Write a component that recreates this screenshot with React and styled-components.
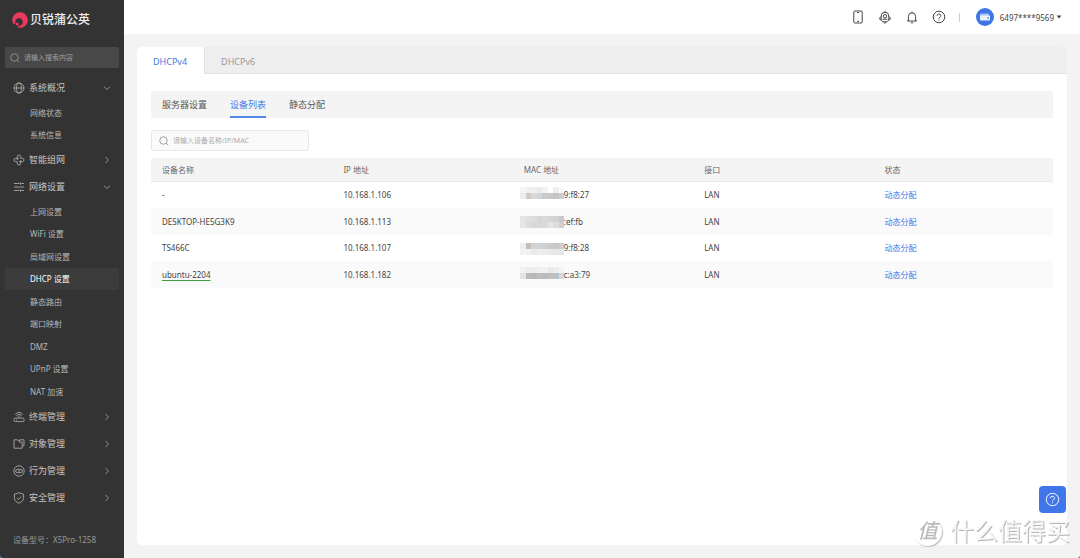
import React, { useState } from 'react';
import styled, { createGlobalStyle } from 'styled-components';

const GlobalStyle = createGlobalStyle`
* {
    box-sizing: border-box;
}
body {
    margin: 0;
    background: #1f7fc4;
    font-family: "Noto Sans", "Noto Sans CJK SC", sans-serif;
    font-size: 8px;
    line-height: 12px;
    color: #444;
}
button, input {
    font-family: inherit;
}
`;

const menus = [
    { name: '系统概况', icon: 'globe', open: true, items: ['网络状态', '系统信息'] },
    { name: '智能组网', icon: 'mesh' },
    {
        name: '网络设置',
        icon: 'sliders',
        open: true,
        items: ['上网设置', 'WiFi 设置', '局域网设置', 'DHCP 设置', '静态路由', '端口映射', 'DMZ', 'UPnP 设置', 'NAT 加速'],
    },
    { name: '终端管理', icon: 'router' },
    { name: '对象管理', icon: 'folder' },
    { name: '行为管理', icon: 'behavior' },
    { name: '安全管理', icon: 'shield' },
];

const devices = [
    {
        name: '-', ip: '10.168.1.106', mac: '9:f8:27', port: 'LAN', top: 1,
        blocks: [
            ['#f4f4f4', '#f0f0ef', '#eeeeee', '#ebebeb', '#f3f3f3', '#ffffff', '#eeeeee', '#fafafa'],
            ['#efedec', '#d2cbc4', '#d8d9d8', '#cdd7dd', '#cacaca', '#c8c7c5', '#c4c4c4', '#cfcfcf'],
        ],
    },
    {
        name: 'DESKTOP-HE5G3K9', ip: '10.168.1.113', mac: ':ef:fb', port: 'LAN', top: 3,
        blocks: [
            ['#e4e4e4', '#e0e0e0', '#dedede', '#d6d6d6', '#d9d9d9', '#d6d6d6', '#d2d2d2', '#c9c9c9'],
            ['#e6e6e6', '#dcdcda', '#d8d8d8', '#d8d8d8', '#dadada', '#e4e4e4', '#dcdcdc', '#cfcfcf'],
        ],
    },
    {
        name: 'TS466C', ip: '10.168.1.107', mac: '9:f8:28', port: 'LAN', top: 4,
        blocks: [
            ['#eeeeee', '#c6beb8', '#d0d4d6', '#cdd3d6', '#cfcfcf', '#cbcbcb', '#c8c8c8', '#cfcfcf'],
            ['#f2f2f2', '#f0f0f0', '#eaeaea', '#eeeeee', '#ececec', '#e9e9e9', '#e7e7e7', '#e6e6e6'],
        ],
    },
    {
        name: 'ubuntu-2204', ip: '10.168.1.182', mac: 'c:a3:79', port: 'LAN', link: true, top: 1,
        blocks: [
            ['#f2f2f2', '#ececec', '#ededed', '#f0f0f0', '#f2f2f2', '#e9e9e9', '#ededed', '#f4f4f4'],
            ['#e4e4e4', '#bababa', '#b8b8b8', '#c3bbb5', '#b8bcc0', '#c4beba', '#b8c2c8', '#d6d6d6'],
        ],
    },
];

const shapes = {
    globe: <><circle cx="7" cy="7" r="5" /><ellipse cx="7" cy="7" rx="2.4" ry="5" /><path d="M2 7h10" /></>,
    mesh: <><path d="M5.3 5.3V3.7a1.7 1.7 0 0 1 3.4 0v1.6M8.7 5.3h1.6a1.7 1.7 0 0 1 0 3.4H7M8.7 7v3.3a1.7 1.7 0 0 1-3.4 0V8.7M5.3 8.7H3.7a1.7 1.7 0 0 1 0-3.4H7M5.3 5.3V7" /></>,
    sliders: <><path d="M2 3.5h5.6M9.4 3.5H12M2 7h2.2M6 7h6M2 10.5h5.6M9.4 10.5H12M8.5 2.3v2.4M5 5.8v2.4M8.5 9.3v2.4" /></>,
    router: <><rect x="2" y="8" width="10" height="3.6" rx="1.2" /><path d="M7 8V5.8M4.6 6.2a2.5 2.5 0 0 1 4.8 0M3.4 4.6a4 4 0 0 1 7.2 0M4 9.8h1" /></>,
    folder: <><path d="M7.6 3.6H6.2L5.2 2.8H2v8.4h8.2V6.6M7.6 2.8h4.4v6h-1.6M7.6 2.8v2.4h2.6v1.6" /></>,
    behavior: <><circle cx="7" cy="7" r="5.2" /><rect x="3.6" y="5.4" width="6.8" height="3.2" rx="1.6" /><path d="M7 5.4v3.2" /></>,
    shield: <><path d="M7 1.8 11.6 3.2v4c0 2.4-2 4-4.6 5-2.6-1-4.6-2.6-4.6-5v-4z" /><path d="m4.8 6.8 1.7 1.6 2.9-3" /></>,
    search: <><circle cx="6.4" cy="6.4" r="4.4" /><path d="m9.6 9.6 2.4 2.4" /></>,
    down: <path d="m3.4 5.5 3.6 3.2 3.6-3.2" />,
    right: <path d="m5.4 3.4 3.2 3.6-3.2 3.6" />,
    phone: <><rect x="2.8" y="1" width="8.4" height="12" rx="1" /><path d="M6 2.6h2M6 11.4h2" /></>,
    robot: <><path d="M3.2 10V6a3.8 3.8 0 0 1 7.6 0v4L9 11.8H5zM3.2 6.4 1.8 7.8v1.6L3.2 10M10.8 6.4l1.4 1.4v1.6l-1.4.6M7 2.2V1M5.8 12.8h2.4M4.6 9.2h4.8" /><circle cx="7" cy="6.2" r="1.7" /></>,
    bell: <><path d="M2 11h10M3.4 11V6.4a3.6 3.6 0 0 1 7.2 0V11M7 2.8V1.4M5.8 12.8h2.4" /></>,
    help: <><circle cx="7" cy="7" r="5.8" /><path d="M5.2 5.8a1.8 1.8 0 1 1 2.7 1.5c-.6.4-.9.6-.9 1.3M7 9.6v.9" /></>,
};

const Icon = ({ name, size = 14 }) => (
    <svg width={size} height={size} viewBox="0 0 14 14" fill="none" stroke="currentColor" strokeWidth="0.9" aria-hidden="true">
        {shapes[name]}
    </svg>
);

const Mosaic = ({ blocks, top }) => (
    <svg width="44" height="18" viewBox="0 0 44 18" shapeRendering="crispEdges" aria-hidden="true">
        {blocks.map((line, y) =>
            line.map((fill, x) => <rect key={x + '-' + y} x={x * 5.5} y={top + y * 6} width="5.5" height="6" fill={fill} />)
        )}
    </svg>
);

const App = () => {
    const [active, setActive] = useState('DHCP 设置');
    const [keyword, setKeyword] = useState('');

    return (
        <Page>
            <GlobalStyle />
            <Sidebar>
                <Brand href="#">
                    <svg width="16" height="16" viewBox="0 0 16 16" aria-hidden="true">
                        <circle cx="8" cy="8" r="7.8" fill="#e8395f" />
                        <circle cx="7" cy="10" r="3.7" fill="#333" />
                        <path d="M3.2 15.6 1.6 12.6 3.8 11l3 3.4z" fill="#333" />
                        <circle cx="5.2" cy="12" r="1.6" fill="#e8395f" />
                    </svg>
                    贝锐蒲公英
                </Brand>
                <MenuSearch>
                    <Icon name="search" size={12} />
                    <input type="search" aria-label="搜索" placeholder="请输入搜索内容" />
                </MenuSearch>
                <Menu>
                    {menus.map((menu) => (
                        <li key={menu.name}>
                            <MenuButton type="button" aria-expanded={!!menu.open}>
                                <Icon name={menu.icon} />
                                <span>{menu.name}</span>
                                <Icon name={menu.open ? 'down' : 'right'} size={12} />
                            </MenuButton>
                            {menu.items && (
                                <SubMenu>
                                    {menu.items.map((item) => (
                                        <SubItem key={item}>
                                            <SubLink href="#" $active={item === active} onClick={() => setActive(item)}>{item}</SubLink>
                                        </SubItem>
                                    ))}
                                </SubMenu>
                            )}
                        </li>
                    ))}
                </Menu>
                <Model>设备型号：X5Pro-1258</Model>
            </Sidebar>

            <Main>
                <TopBar>
                    <TopButton type="button" aria-label="手机"><Icon name="phone" /></TopButton>
                    <TopButton type="button" aria-label="助手"><Icon name="robot" /></TopButton>
                    <TopButton type="button" aria-label="通知"><Icon name="bell" /></TopButton>
                    <TopButton type="button" aria-label="帮助"><Icon name="help" /></TopButton>
                    <Divider />
                    <Account type="button">
                        <svg width="18" height="18" viewBox="0 0 18 18" aria-hidden="true">
                            <circle cx="9" cy="9" r="9" fill="#3f75e6" />
                            <rect x="4" y="5.4" width="9" height="6" rx="1" fill="#a9c3fa" />
                            <path d="M4 7.4h10v4.2a1 1 0 0 1-1 1H5a1 1 0 0 1-1-1z" fill="#eef3ff" />
                            <path d="M11 10h2" stroke="#3f75e6" />
                        </svg>
                        <span>6497****9569</span>
                        <svg width="6" height="4" viewBox="0 0 6 4" aria-hidden="true"><path d="M.6.6h4.8L3 3.4z" fill="#444" /></svg>
                    </Account>
                </TopBar>

                <Card>
                    <Tabs>
                        <Tab type="button" $active>DHCPv4</Tab>
                        <Tab type="button">DHCPv6</Tab>
                    </Tabs>
                    <CardBody>
                        <SubTabs>
                            <SubTab type="button">服务器设置</SubTab>
                            <SubTab type="button" $active>设备列表</SubTab>
                            <SubTab type="button">静态分配</SubTab>
                        </SubTabs>
                        <DeviceSearch>
                            <Icon name="search" size={12} />
                            <input
                                type="search"
                                aria-label="设备搜索"
                                placeholder="请输入设备名称/IP/MAC"
                                value={keyword}
                                onChange={(e) => setKeyword(e.target.value)}
                            />
                        </DeviceSearch>
                        <Table>
                            <thead>
                                <tr>
                                    <th>设备名称</th>
                                    <th>IP 地址</th>
                                    <th>MAC 地址</th>
                                    <th>接口</th>
                                    <th>状态</th>
                                </tr>
                            </thead>
                            <tbody>
                                {devices.filter((d) => (d.name + d.ip + d.mac).includes(keyword)).map((d) => (
                                    <tr key={d.ip}>
                                        <td>{d.link ? <DeviceLink href="#">{d.name}</DeviceLink> : d.name}</td>
                                        <td>{d.ip}</td>
                                        <MacCell>
                                            <Mac><Mosaic blocks={d.blocks} top={d.top} />{d.mac}</Mac>
                                        </MacCell>
                                        <td>{d.port}</td>
                                        <td><Status>动态分配</Status></td>
                                    </tr>
                                ))}
                            </tbody>
                        </Table>
                    </CardBody>
                </Card>
            </Main>

            <HelpButton type="button" aria-label="帮助"><Icon name="help" size={15} /></HelpButton>
            <Watermark>
                <Seal>值</Seal>
                什么值得买
            </Watermark>
        </Page>
    );
};

const Page = styled.div`
display: flex;
min-height: 100vh;
background: #f3f3f3;
border-radius: 0 0 3px 3px;
overflow: hidden;
`;

const Sidebar = styled.aside`
display: flex;
flex-direction: column;
flex: none;
width: 124px;
padding: 11px 5px 12px;
background: #333;
color: #bbb;
`;

const Brand = styled.a`
display: flex;
align-items: center;
gap: 2px;
height: 18px;
margin: 0 7px 18px;
color: #eee;
font-size: 12px;
font-weight: 500;
text-decoration: none;
white-space: nowrap;
`;

const SearchBox = styled.label`
display: flex;
align-items: center;
gap: 3px;

input {
    flex: 1;
    min-width: 0;
    padding: 0;
    border: 0;
    outline: 0;
    background: none;
    color: inherit;
    font-size: 7px;
}
`;

const MenuSearch = styled(SearchBox)`
height: 21px;
margin-bottom: 6px;
padding: 0 4px;
border-radius: 2px;
background: #484848;
color: #a0a0a0;

input::placeholder {
    color: #a0a0a0;
}
`;

const DeviceSearch = styled(SearchBox)`
width: 158px;
height: 21px;
margin: 12px 0 7px;
padding: 0 6px;
border: 1px solid #e8e8e8;
border-radius: 2px;
background: #fafafa;
color: #888;

input::placeholder {
    color: #aaa;
}
`;

const Menu = styled.ul`
margin: 0;
padding: 0;
list-style: none;
`;

const MenuButton = styled.button`
display: flex;
align-items: center;
gap: 3px;
width: 100%;
height: 27px;
padding: 0 6px 0 7px;
border: 0;
background: none;
color: #a8a8a8;
font-size: 9px;
cursor: pointer;

span {
    flex: 1;
    text-align: left;
    color: #c4c4c4;
}
`;

const SubMenu = styled.ul`
margin: 0;
padding: 0;
list-style: none;
`;

const SubItem = styled.li`
display: flex;
height: 22px;

&:nth-child(odd) {
    height: 23px;
}
`;

const SubLink = styled.a`
display: flex;
align-items: center;
flex: 1;
padding-left: 25px;
border-radius: 2px;
background: ${(p) => (p.$active ? '#3c3c3c' : 'transparent')};
color: ${(p) => (p.$active ? '#fff' : '#b8b8b8')};
text-decoration: none;
`;

const Model = styled.div`
margin-top: auto;
padding-left: 8px;
color: #999;
white-space: nowrap;
`;

const Main = styled.main`
display: flex;
flex-direction: column;
flex: 1;
min-width: 0;
`;

const TopBar = styled.header`
display: flex;
align-items: center;
justify-content: flex-end;
gap: 13px;
height: 34px;
padding-right: 18px;
background: #fff;
`;

const TopButton = styled.button`
display: flex;
padding: 0;
border: 0;
background: none;
color: #333;
cursor: pointer;
`;

const Divider = styled.span`
width: 1px;
height: 9px;
background: #ccc;
`;

const Account = styled.button`
display: flex;
align-items: center;
gap: 2px;
margin-left: 3px;
padding: 0;
border: 0;
background: none;
color: #444;
font-size: 8px;
cursor: pointer;

span {
    margin-left: 4px;
}
`;

const Card = styled.section`
flex: 1;
margin: 13px;
border-radius: 5px;
background: #fff;
overflow: hidden;
`;

const Tabs = styled.div`
display: flex;
height: 27px;
background: #eee;
box-shadow: inset 0 -1px #e2e2e2;
`;

const Tab = styled.button`
padding: 2px 17px 0 16px;
border: 0;
border-right: 1px solid ${(p) => (p.$active ? '#e2e2e2' : 'transparent')};
background: ${(p) => (p.$active ? '#fff' : 'transparent')};
color: ${(p) => (p.$active ? '#4378e8' : '#999')};
font-size: 9px;
cursor: pointer;
`;

const CardBody = styled.div`
padding: 17px 14px;
`;

const SubTabs = styled.div`
display: flex;
gap: 23px;
height: 27px;
padding: 0 11px;
background: #f4f4f4;
`;

const SubTab = styled.button`
padding: 2px 0 0;
border: 0;
border-bottom: 2px solid ${(p) => (p.$active ? '#5584ea' : 'transparent')};
background: none;
color: ${(p) => (p.$active ? '#4378e8' : '#555')};
font-size: 9px;
cursor: pointer;
`;

const Table = styled.table`
width: 100%;
table-layout: fixed;
border-collapse: collapse;

th, td {
    padding: 0 12px;
    text-align: left;
    font-weight: 400;
    white-space: nowrap;
}
th:first-child, td:first-child {
    padding-left: 11px;
}
th {
    height: 24px;
    background: #f4f4f4;
    box-shadow: inset 0 -1px #e9e9e9;
    color: #666;
}
td {
    height: 26px;
}
tbody tr:nth-child(even) td {
    height: 27px;
    background: #fafafa;
}
`;

const MacCell = styled.td`
&& {
    padding-left: 8px;
}
`;

const Mac = styled.div`
display: flex;
align-items: center;
`;

const DeviceLink = styled.a`
color: inherit;
text-decoration: underline 1px #3fa03f;
text-underline-offset: 2px;
text-decoration-skip-ink: none;
`;

const Status = styled.span`
color: #4378e8;
`;

const HelpButton = styled.button`
position: fixed;
right: 14px;
bottom: 45px;
display: flex;
align-items: center;
justify-content: center;
width: 27px;
height: 27px;
padding: 0;
border: 0;
border-radius: 4px;
background: #4076ea;
color: #fff;
cursor: pointer;
`;

const Watermark = styled.div`
position: fixed;
right: 10px;
bottom: 12px;
display: flex;
align-items: center;
gap: 8px;
color: #f6f6f6;
font-size: 24px;
line-height: 30px;
text-shadow: 1px 1px 0 #b4b4b4;
pointer-events: none;
`;

const Seal = styled.span`
width: 29px;
height: 29px;
border-radius: 50%;
background: #fff;
box-shadow: 1px 1px 1px #bbb;
color: #bbb;
font-size: 20px;
font-style: italic;
font-weight: 500;
line-height: 28px;
text-align: center;
text-shadow: none;
`;

export default App;
